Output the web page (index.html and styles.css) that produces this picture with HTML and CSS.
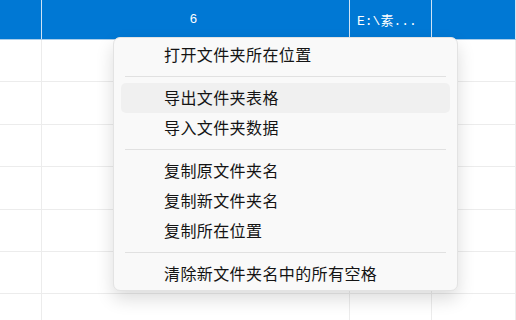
FILE: index.html
```html
<!DOCTYPE html>
<html lang="zh-CN">
<head>
    <meta charset="UTF-8">
    <meta name="viewport" content="width=device-width, initial-scale=1.0">
    <title>文件夹重命名</title>
    <link rel="stylesheet" href="styles.css">
</head>
<body>
<div class="sheet">
    <div class="row head">
        <div class="cell"></div>
        <div class="cell num">6</div>
        <div class="cell path">E:\素...</div>
        <div class="cell"></div>
    </div>
    <div class="row"><div class="cell"></div><div class="cell"></div><div class="cell"></div><div class="cell"></div></div>
    <div class="row"><div class="cell"></div><div class="cell"></div><div class="cell"></div><div class="cell"></div></div>
    <div class="row"><div class="cell"></div><div class="cell"></div><div class="cell"></div><div class="cell"></div></div>
    <div class="row"><div class="cell"></div><div class="cell"></div><div class="cell"></div><div class="cell"></div></div>
    <div class="row"><div class="cell"></div><div class="cell"></div><div class="cell"></div><div class="cell"></div></div>
    <div class="row"><div class="cell"></div><div class="cell"></div><div class="cell"></div><div class="cell"></div></div>
    <div class="row"><div class="cell"></div><div class="cell"></div><div class="cell"></div><div class="cell"></div></div>
</div>

<div class="menu">
    <div class="item">打开文件夹所在位置</div>
    <div class="sep"></div>
    <div class="item hover">导出文件夹表格</div>
    <div class="item">导入文件夹数据</div>
    <div class="sep"></div>
    <div class="item">复制原文件夹名</div>
    <div class="item">复制新文件夹名</div>
    <div class="item">复制所在位置</div>
    <div class="sep"></div>
    <div class="item">清除新文件夹名中的所有空格</div>
</div>
</body>
</html>
```

FILE: styles.css
```css
html, body {
    margin: 0;
    padding: 0;
    height: 100%;
    overflow: hidden;
    background: #ffffff;
    font-family: "Noto Sans CJK SC", "Noto Sans", sans-serif;
}

.sheet {
    width: 100%;
    height: 320px;
    overflow: hidden;
}
.row {
    display: grid;
    grid-template-columns: 42px 308px 82px 1fr;
    height: 42.4px;
    box-sizing: border-box;
    border-bottom: 1px solid #ececec;
}
.cell {
    border-right: 1px solid #ececec;
    display: flex;
    align-items: center;
    justify-content: center;
}
.row.head {
    height: 40px;
    background: #0078d4;
    border-bottom: 1px solid #a9cdea;
    color: #ffffff;
    font-family: "Liberation Mono", "Noto Sans CJK SC", monospace;
    font-size: 13px;
}
.head .cell {
    border-right: 1px solid #cfe3f5;
}
.head .num {
    padding-right: 4px;
}
.head .path {
    justify-content: flex-start;
    padding-left: 7px;
}

.menu {
    position: absolute;
    left: 113px;
    top: 37px;
    width: 345px;
    box-sizing: border-box;
    padding: 2px 7px 1px 7px;
    background: #f9f9f9;
    border: 1px solid #e3e3e3;
    border-radius: 7px;
    box-shadow: 0 8px 18px rgba(0, 0, 0, 0.14);
}
.item {
    height: 30px;
    line-height: 28px;
    padding-left: 43px;
    font-size: 16px;
    letter-spacing: 0.4px;
    color: #141414;
    border-radius: 5px;
}
.item.hover {
    background: #f0f0f0;
}
.sep {
    height: 1px;
    margin: 6px 4px;
    background: #e1e1e1;
}
```
